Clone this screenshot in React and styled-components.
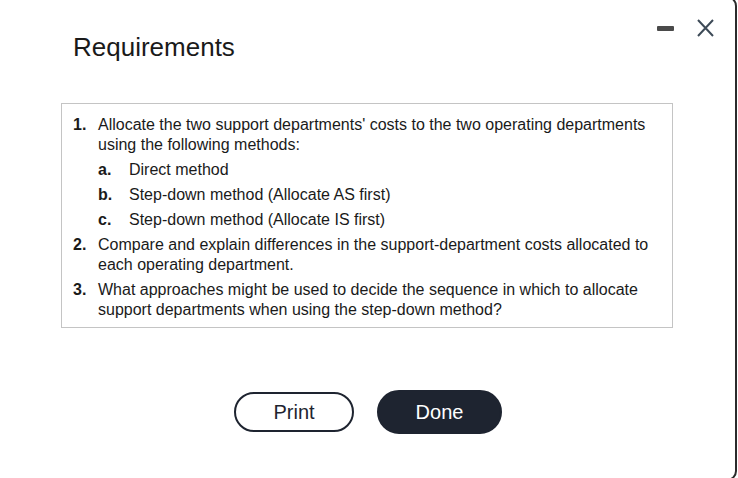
import React from "react";
import styled, { createGlobalStyle } from "styled-components";

const GlobalStyle = createGlobalStyle`
  html, body {
    margin: 0;
    padding: 0;
    background: #ffffff;
    overflow: hidden;
  }
  body {
    font-family: "Liberation Sans", Arial, sans-serif;
    color: #1a1a1a;
  }
`;

const Dialog = styled.div`
  box-sizing: border-box;
  width: 747px;
  height: 485px;
  margin: -4px 0 0 -10px;
  border: 2px solid #2b2b2b;
  border-radius: 10px;
  background: #fff;
  display: flex;
  flex-direction: column;
`;

const Header = styled.div`
  display: flex;
  justify-content: space-between;
  align-items: flex-start;
  padding: 0 21px 0 81px;
`;

const Title = styled.h2`
  margin: 35px 0 0;
  font-size: 26px;
  font-weight: 400;
  line-height: 29px;
  color: #1a1a1a;
`;

const Controls = styled.div`
  display: flex;
  align-items: center;
  gap: 23px;
  margin-top: 21px;
`;

const IconButton = styled.button`
  border: 0;
  background: none;
  padding: 0;
  margin: 0;
  display: flex;
  align-items: center;
  justify-content: center;
  width: 17px;
  height: 18px;
  cursor: pointer;
`;

const MinBar = styled.span`
  display: block;
  width: 17px;
  height: 5px;
  border-radius: 1px;
  background: #4a4a4a;
`;

const Body = styled.div`
  padding: 0 0 0 69px;
  margin-top: 41px;
`;

const Box = styled.div`
  box-sizing: border-box;
  width: 612px;
  border: 1px solid #c4c4c4;
  padding: 11px 12px 7px 11px;
`;

const List = styled.ol`
  list-style: none;
  margin: 0;
  padding: 0;
  font-size: 16px;
  line-height: 20px;
  color: #1a1a1a;
`;

const Item = styled.li`
  display: flex;
  & + & {
    margin-top: 5px;
  }
`;

const Marker = styled.span`
  flex: 0 0 ${(p) => p.$w}px;
  font-weight: 700;
`;

const ItemText = styled.div`
  flex: 1;
`;

const SubList = styled.ol`
  list-style: none;
  margin: 5px 0 0;
  padding: 0;
`;

const Footer = styled.div`
  width: 612px;
  margin: 62px 0 0 70px;
  display: flex;
  justify-content: center;
  align-items: center;
  gap: 23px;
`;

const Button = styled.button`
  box-sizing: border-box;
  font-family: "Liberation Sans", Arial, sans-serif;
  font-size: 20px;
  border-radius: 999px;
  cursor: pointer;
  width: ${(p) => (p.$primary ? 125 : 120)}px;
  height: ${(p) => (p.$primary ? 44 : 40)}px;
  border: 2px solid #1e2430;
  background: ${(p) => (p.$primary ? "#1e2430" : "#ffffff")};
  color: ${(p) => (p.$primary ? "#ffffff" : "#1e2430")};
  padding: 0;
`;

const subItems = [
  ["a.", "Direct method"],
  ["b.", "Step-down method (Allocate AS first)"],
  ["c.", "Step-down method (Allocate IS first)"],
];

export default function App() {
  return (
    <>
      <GlobalStyle />
      <Dialog>
        <Header>
          <Title>Requirements</Title>
          <Controls>
            <IconButton aria-label="Minimize">
              <MinBar />
            </IconButton>
            <IconButton aria-label="Close">
              <svg width="17" height="18" viewBox="0 0 17 18">
                <path
                  d="M1 1 L16 17 M16 1 L1 17"
                  stroke="#3d4a57"
                  strokeWidth="2"
                  fill="none"
                />
              </svg>
            </IconButton>
          </Controls>
        </Header>
        <Body>
          <Box>
            <List>
              <Item>
                <Marker $w={25}>1.</Marker>
                <ItemText>
                  Allocate the two support departments' costs to the two
                  operating departments using the following methods:
                  <SubList>
                    {subItems.map(([k, t]) => (
                      <Item key={k}>
                        <Marker $w={31}>{k}</Marker>
                        <ItemText>{t}</ItemText>
                      </Item>
                    ))}
                  </SubList>
                </ItemText>
              </Item>
              <Item>
                <Marker $w={25}>2.</Marker>
                <ItemText>
                  Compare and explain differences in the support-department
                  costs allocated to each operating department.
                </ItemText>
              </Item>
              <Item>
                <Marker $w={25}>3.</Marker>
                <ItemText>
                  What approaches might be used to decide the sequence in which
                  to allocate support departments when using the step-down
                  method?
                </ItemText>
              </Item>
            </List>
          </Box>
        </Body>
        <Footer>
          <Button>Print</Button>
          <Button $primary>Done</Button>
        </Footer>
      </Dialog>
    </>
  );
}
